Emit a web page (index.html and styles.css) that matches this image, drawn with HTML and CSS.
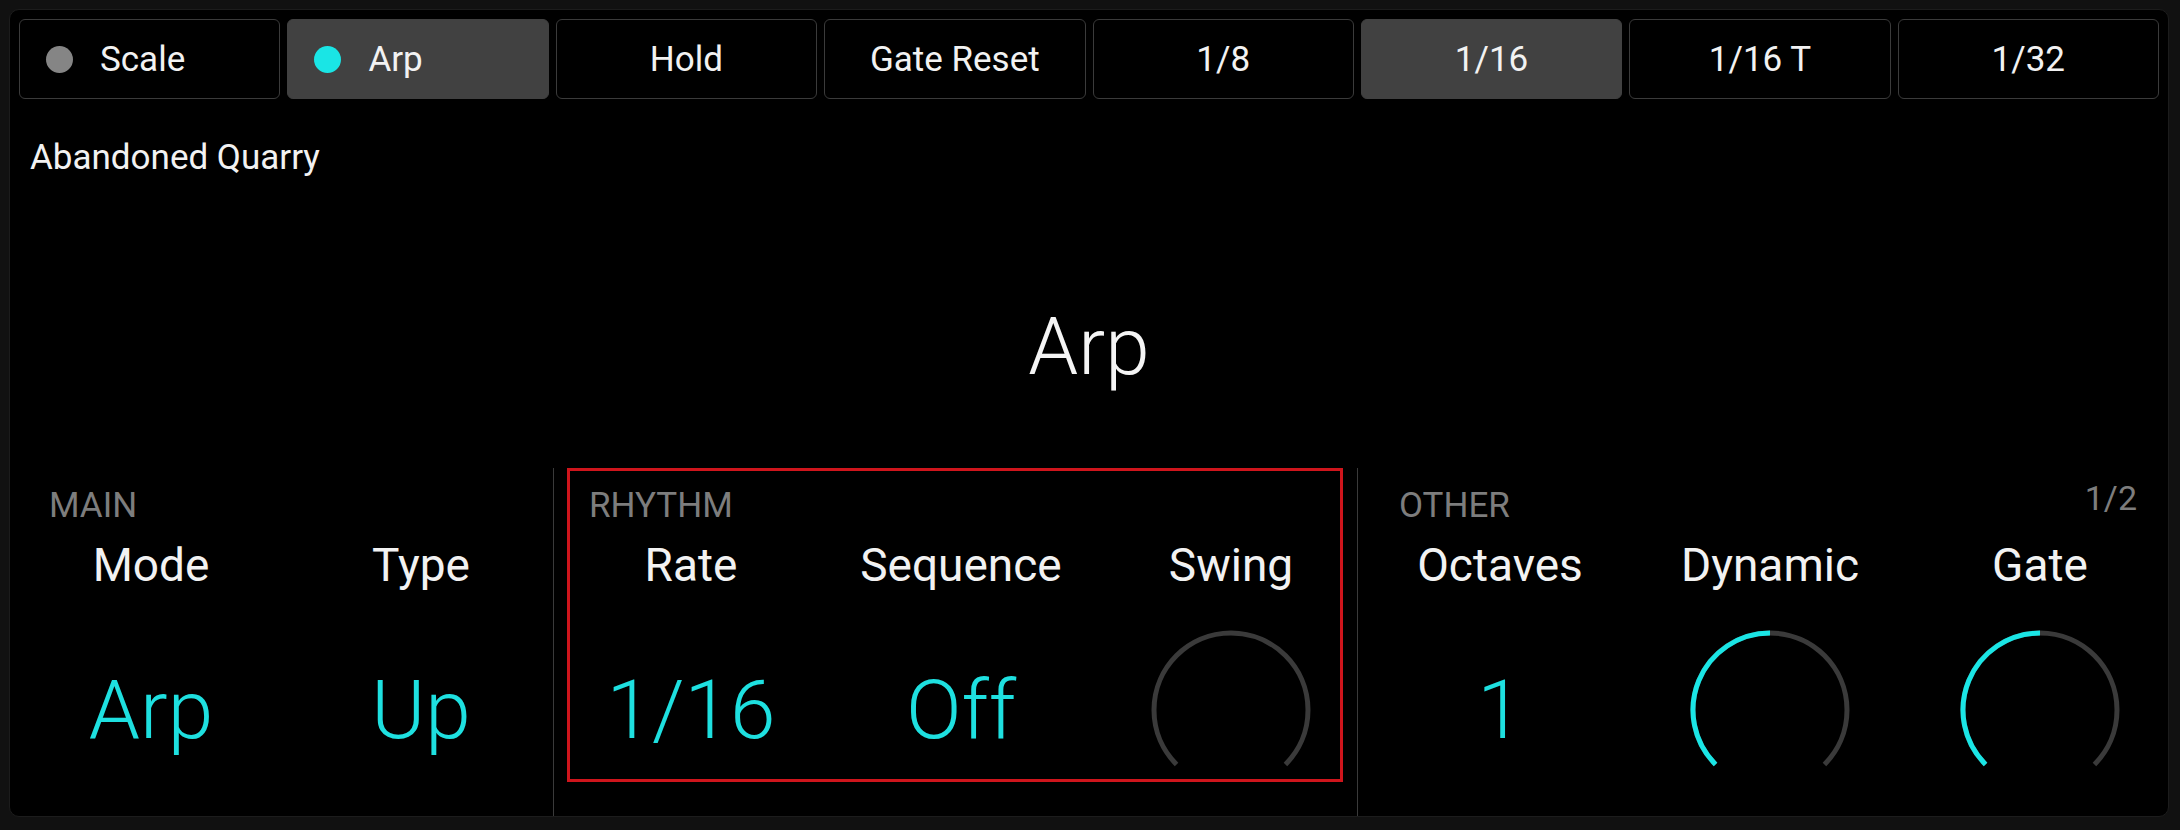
FILE: index.html
```html
<!DOCTYPE html>
<html lang="en">
<head>
<meta charset="utf-8">
<title>Arp</title>
<link rel="stylesheet" href="styles.css">
</head>
<body>
<div class="panel">
  <nav class="tabs">
    <button class="tab tab-dot"><span class="dot dot-off"></span><span>Scale</span></button>
    <button class="tab tab-dot is-active"><span class="dot dot-on"></span><span>Arp</span></button>
    <button class="tab">Hold</button>
    <button class="tab">Gate Reset</button>
    <button class="tab">1/8</button>
    <button class="tab is-active">1/16</button>
    <button class="tab">1/16 T</button>
    <button class="tab">1/32</button>
  </nav>
  <div class="preset">Abandoned Quarry</div>
  <h1 class="title">Arp</h1>
  <div class="controls">
    <section class="group group-main">
      <div class="group-head"><span class="group-name">MAIN</span></div>
      <div class="params">
        <div class="param"><div class="param-label">Mode</div><div class="param-value">Arp</div></div>
        <div class="param"><div class="param-label">Type</div><div class="param-value">Up</div></div>
      </div>
    </section>
    <section class="group group-rhythm">
      <div class="highlight"></div>
      <div class="group-head"><span class="group-name">RHYTHM</span></div>
      <div class="params">
        <div class="param"><div class="param-label">Rate</div><div class="param-value">1/16</div></div>
        <div class="param"><div class="param-label">Sequence</div><div class="param-value">Off</div></div>
        <div class="param"><div class="param-label">Swing</div><div class="param-value">
          <svg class="knob" width="170" height="170" viewBox="0 0 170 170">
            <path class="knob-track" d="M30.55 139.45 A77 77 0 1 1 139.45 139.45"/>
          </svg>
        </div></div>
      </div>
    </section>
    <section class="group group-other">
      <div class="group-head"><span class="group-name">OTHER</span><span class="page">1/2</span></div>
      <div class="params">
        <div class="param"><div class="param-label">Octaves</div><div class="param-value">1</div></div>
        <div class="param"><div class="param-label">Dynamic</div><div class="param-value">
          <svg class="knob" width="170" height="170" viewBox="0 0 170 170">
            <path class="knob-track" d="M30.55 139.45 A77 77 0 1 1 139.45 139.45"/>
            <path class="knob-fill" d="M30.55 139.45 A77 77 0 0 1 85 8"/>
          </svg>
        </div></div>
        <div class="param"><div class="param-label">Gate</div><div class="param-value">
          <svg class="knob" width="170" height="170" viewBox="0 0 170 170">
            <path class="knob-track" d="M30.55 139.45 A77 77 0 1 1 139.45 139.45"/>
            <path class="knob-fill" d="M30.55 139.45 A77 77 0 0 1 85 8"/>
          </svg>
        </div></div>
      </div>
    </section>
  </div>
</div>
</body>
</html>
```

FILE: styles.css
```css
* { box-sizing: border-box; }

html, body {
  margin: 0;
  padding: 0;
  background: #111111;
}

body {
  width: 2180px;
  height: 830px;
  overflow: hidden;
  font-family: Roboto, "Liberation Sans", sans-serif;
  color: #f2f2f2;
}

.panel {
  margin: 9px 11px 13px 9px;
  width: 2160px;
  height: 808px;
  background: #000;
  border: 1px solid #1c1c1c;
  border-radius: 10px;
  padding: 9px 9px 0 9px;
  display: flex;
  flex-direction: column;
  overflow: hidden;
}

.tabs {
  display: grid;
  grid-template-columns: repeat(8, minmax(0, 1fr));
  gap: 7px;
  height: 80px;
  flex: none;
}

.tab {
  min-width: 0;
  height: 80px;
  background: #000;
  border: 1px solid #3b3b3b;
  border-radius: 6px;
  color: #f2f2f2;
  font-family: Roboto, "Liberation Sans", sans-serif;
  font-size: 35px;
  font-weight: 400;
  display: flex;
  align-items: center;
  justify-content: center;
  padding: 0;
}

.tab.is-active {
  background: #414141;
  border-color: #414141;
}

.tab-dot {
  justify-content: flex-start;
  padding-left: 26px;
  gap: 27px;
}

.dot {
  width: 27px;
  height: 27px;
  border-radius: 50%;
  flex: none;
}

.dot-off { background: #858585; }
.dot-on { background: #1ae5e5; }

.preset {
  margin-top: 39px;
  padding-left: 11px;
  font-size: 35px;
  line-height: 40px;
  height: 40px;
  color: #f2f2f2;
}

.title {
  margin: 129px 0 0 0;
  font-size: 80px;
  font-weight: 300;
  line-height: 80px;
  height: 80px;
  text-align: center;
  color: #f5f5f5;
}

.controls {
  margin: 81px -9px 0 -9px;
  flex: 1 1 auto;
  display: flex;
  min-width: 0;
}

.group {
  position: relative;
  padding-top: 18px;
  flex: none;
  min-width: 0;
}

.group-main { width: 543px; }
.group-rhythm { width: 804px; border-left: 1px solid #3a3a3a; }
.group-other { flex: 1 1 0; border-left: 1px solid #3a3a3a; }

.group-head {
  display: flex;
  justify-content: space-between;
  align-items: flex-start;
  height: 40px;
  line-height: 40px;
  font-size: 35px;
  color: #7d7d7d;
}

.group-main .group-head { padding-left: 39px; }
.group-rhythm .group-head { padding-left: 35px; }
.group-other .group-head { padding: 0 31px 0 41px; }

.page {
  font-size: 34px;
  line-height: 30px;
  margin-top: -3px;
}

.params {
  display: flex;
  margin-top: 12px;
}

.group-main .params { padding-left: 6px; }
.group-rhythm .params { padding-left: 2px; }
.group-other .params { padding-left: 7px; }

.param {
  width: 270px;
  flex: none;
  display: flex;
  flex-direction: column;
  align-items: center;
}

.param-label {
  font-size: 46px;
  line-height: 54px;
  height: 54px;
  color: #f2f2f2;
  white-space: nowrap;
}

.param-value {
  margin-top: 33px;
  height: 170px;
  display: flex;
  align-items: center;
  justify-content: center;
  font-size: 82px;
  font-weight: 300;
  line-height: 1;
  color: #1ee0e0;
  white-space: nowrap;
}

.knob { display: block; }

.knob-track {
  fill: none;
  stroke: #3a3a3a;
  stroke-width: 5;
}

.knob-fill {
  fill: none;
  stroke: #1ae5e5;
  stroke-width: 5;
}

.highlight {
  position: absolute;
  left: 13px;
  right: 14px;
  top: 0;
  bottom: 34px;
  border: 3px solid #cf151c;
  pointer-events: none;
}
```
